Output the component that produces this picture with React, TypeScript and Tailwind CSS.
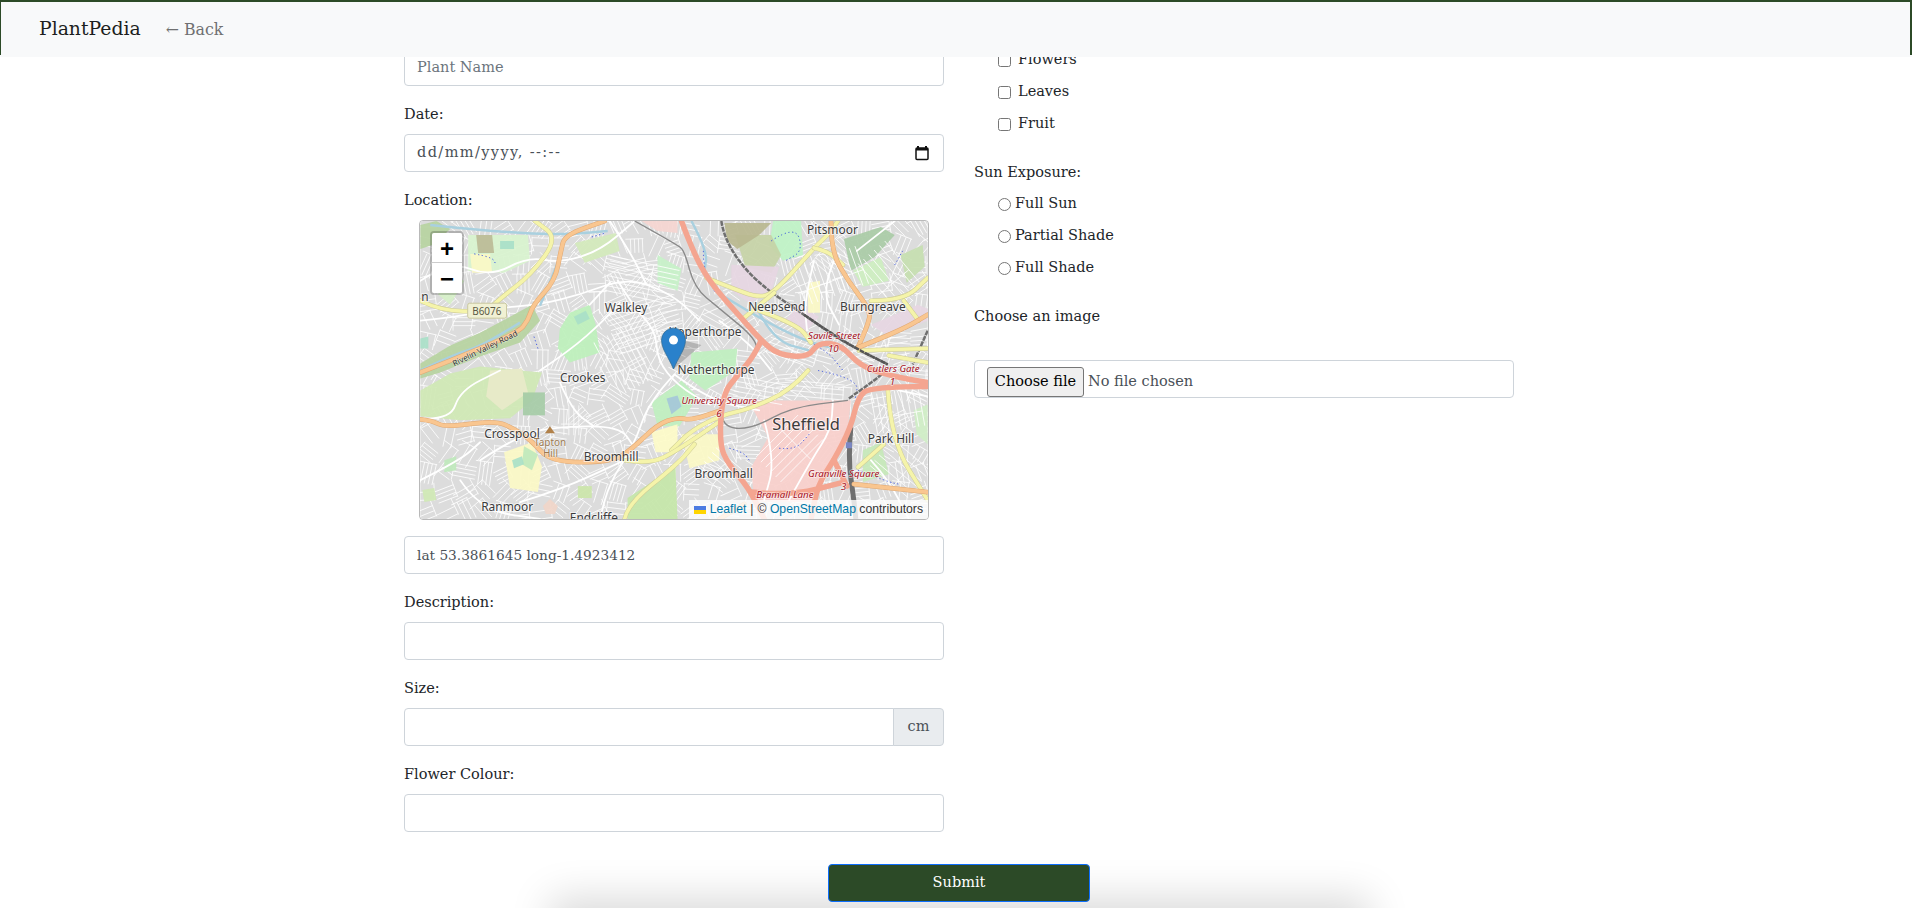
import React from 'react';

type Pt = [number, number];

const smooth = (pts: Pt[]) => {
  let d = `M${pts[0][0]} ${pts[0][1]}`;
  for (let i = 1; i < pts.length - 1; i++) {
    const mx = (pts[i][0] + pts[i + 1][0]) / 2;
    const my = (pts[i][1] + pts[i + 1][1]) / 2;
    d += ` Q${pts[i][0]} ${pts[i][1]} ${mx} ${my}`;
  }
  const last = pts[pts.length - 1];
  return `${d} L${last[0]} ${last[1]}`;
};

const poly = (pts: Pt[]) => pts.map((p) => p.join(',')).join(' ');

const land: { c: string; p: Pt[] }[] = [
  { c: '#cfe8b4', p: [[0, 170], [30, 153], [60, 146], [100, 150], [122, 152], [112, 180], [90, 198], [40, 200], [0, 196]] },
  { c: '#e8e9c9', p: [[70, 150], [102, 148], [108, 172], [82, 190], [66, 176]] },
  { c: '#a5cba6', p: [[103, 172], [125, 172], [125, 195], [103, 195]] },
  { c: '#b6d3a0', p: [[0, 143], [30, 125], [60, 112], [90, 96], [112, 84], [120, 100], [100, 122], [60, 136], [20, 152], [0, 158]] },
  { c: '#b6d3a0', p: [[0, 4], [16, 0], [30, 8], [12, 24], [0, 28]] },
  { c: '#d8f3ce', p: [[48, 14], [108, 14], [110, 40], [84, 52], [48, 50]] },
  { c: '#fbf8c6', p: [[50, 33], [70, 33], [72, 52], [52, 52]] },
  { c: '#bcbb96', p: [[56, 14], [72, 14], [74, 32], [58, 32]] },
  { c: '#a9e0c8', p: [[80, 20], [94, 20], [94, 28], [80, 28]] },
  { c: '#bdf0bb', p: [[150, 92], [170, 84], [176, 104], [180, 132], [150, 142], [138, 128], [140, 108]] },
  { c: '#a9e0c8', p: [[154, 96], [166, 90], [170, 98], [158, 104]] },
  { c: '#d2e9bb', p: [[155, 22], [196, 12], [200, 30], [165, 42]] },
  { c: '#c7f1c8', p: [[238, 34], [262, 48], [258, 70], [238, 62]] },
  { c: '#bff3c6', p: [[354, 0], [382, 0], [384, 34], [364, 40], [350, 24]] },
  { c: '#c6d3a6', p: [[316, 14], [352, 14], [362, 34], [352, 52], [326, 46]] },
  { c: '#b8b78f', p: [[305, 2], [352, 2], [340, 14], [318, 28], [308, 20]] },
  { c: '#a9cba6', p: [[425, 18], [462, 6], [476, 14], [456, 36], [432, 50]] },
  { c: '#cdeec0', p: [[434, 50], [462, 36], [470, 60], [444, 66]] },
  { c: '#c5deb0', p: [[482, 34], [504, 24], [506, 46], [488, 62]] },
  { c: '#e6d6e2', p: [[312, 44], [360, 46], [352, 72], [330, 82], [312, 70]] },
  { c: '#e6d6e2', p: [[452, 104], [499, 84], [509, 88], [509, 100], [470, 116]] },
  { c: '#e6d6e2', p: [[380, 84], [400, 96], [386, 112], [366, 100]] },
  { c: '#fbf8c6', p: [[389, 62], [401, 60], [401, 92], [389, 92]] },
  { c: '#bfefbf', p: [[272, 132], [318, 128], [316, 150], [286, 170], [270, 158]] },
  { c: '#bfefbf', p: [[232, 182], [262, 160], [278, 176], [260, 206], [238, 206]] },
  { c: '#a5c7d9', p: [[247, 178], [258, 175], [262, 186], [252, 194]] },
  { c: '#fbf8c6', p: [[84, 232], [112, 222], [122, 246], [118, 272], [90, 268]] },
  { c: '#bfe8bc', p: [[104, 226], [118, 234], [112, 250], [102, 244]] },
  { c: '#a9e0c8', p: [[92, 240], [102, 236], [104, 244], [94, 248]] },
  { c: '#c4e6a8', p: [[208, 278], [256, 246], [258, 299], [208, 299]] },
  { c: '#cbe5a9', p: [[158, 266], [172, 266], [172, 278], [158, 278]] },
  { c: '#f0d5c8', p: [[123, 286], [130, 279], [138, 286], [135, 294], [126, 294]] },
  { c: '#fdfbc8', p: [[232, 212], [258, 204], [258, 232], [236, 232]] },
  { c: '#f8cfcb', p: [[329, 180], [432, 180], [429, 207], [412, 247], [392, 282], [335, 282], [332, 247], [349, 217]] },
  { c: '#f5d5d0', p: [[222, 0], [258, 0], [258, 12], [238, 10]] },
  { c: '#fbf8c6', p: [[262, 214], [300, 214], [300, 240], [270, 248]] },
  { c: '#c6e8b9', p: [[444, 230], [462, 222], [470, 254], [444, 262]] },
  { c: '#cfeec6', p: [[495, 190], [509, 184], [509, 224], [498, 214]] },
  { c: '#a9e0c8', p: [[0, 118], [8, 116], [8, 128], [0, 128]] },
  { c: '#cfe8b4', p: [[2, 270], [14, 268], [16, 280], [4, 282]] },
  { c: '#bfe8bc', p: [[24, 240], [36, 236], [36, 250], [24, 252]] },
  { c: '#d6f0c8', p: [[20, 52], [44, 60], [30, 84], [18, 74]] },
];

// relleno de calles pequeñas: una retícula pseudoaleatoria, siempre igual
const fineStreets = (() => {
  let seed = 7;
  const rnd = () => {
    seed = (seed * 16807) % 2147483647;
    return seed / 2147483647;
  };
  const out: { d: string; t: string }[] = [];
  for (let y = 6; y < 310; y += 19) {
    for (let x = 6; x < 520; x += 19) {
      const a = Math.round(rnd() * 180);
      const w = 14 + rnd() * 10;
      let d = '';
      const rows = 2 + Math.floor(rnd() * 3);
      for (let r = 0; r < rows; r++) {
        const oy = -8 + (r * 16) / rows;
        d += `M${-w / 2} ${oy.toFixed(1)}H${(w / 2).toFixed(1)}`;
      }
      d += `M${(-w / 2).toFixed(1)} -9V9`;
      out.push({ d, t: `translate(${x} ${y}) rotate(${a})` });
    }
  }
  return out;
})();

const blocks: [number, number, number, number, number, number][] = [
  [222, 60, 70, 36, 12, 5], [226, 104, 70, 40, -18, 5], [204, 140, 60, 44, 62, 5],
  [410, 56, 40, 70, 70, 6], [470, 56, 60, 40, 50, 7], [340, 170, 50, 20, 10, 5],
  [300, 250, 34, 30, 40, 6], [372, 230, 60, 40, -45, 7], [478, 190, 40, 50, 80, 6],
  [480, 250, 50, 40, 40, 7], [368, 130, 40, 24, 20, 5], [460, 130, 60, 20, -10, 6],
  [395, 170, 60, 16, 5, 5], [150, 200, 30, 18, 90, 5],
];

const hatch = ([cx, cy, w, h, a, gap]: (typeof blocks)[number]) => {
  let d = '';
  for (let y = -h / 2; y <= h / 2; y += gap) d += `M${-w / 2} ${y}H${w / 2}`;
  d += `M${w / 8} ${-h / 2}V${h / 2}`;
  return { d, t: `translate(${cx} ${cy}) rotate(${a})` };
};

const streets: Pt[][] = [
  [[0, 60], [30, 40], [70, 56], [108, 36], [140, 42], [180, 30], [215, 0]],
  [[0, 100], [40, 96], [70, 88], [120, 84], [160, 74], [198, 60], [226, 62], [258, 78], [280, 100]],
  [[198, 60], [214, 86], [236, 110], [238, 140], [258, 165], [290, 184]],
  [[190, 0], [210, 30], [226, 62]],
  [[170, 84], [190, 62]],
  [[120, 150], [150, 130], [184, 100], [200, 82]],
  [[0, 198], [30, 200], [40, 170], [80, 150]],
  [[60, 240], [100, 214], [140, 206], [200, 206], [214, 226]],
  [[0, 260], [40, 240], [60, 222]],
  [[40, 260], [60, 290], [120, 299]],
  [[100, 282], [140, 270], [205, 240]],
  [[255, 154], [230, 180], [214, 226], [190, 262], [180, 299]],
  [[255, 154], [290, 180], [340, 190]],
  [[140, 162], [152, 190], [174, 206]],
  [[300, 100], [330, 122], [352, 150]],
  [[395, 40], [385, 80], [388, 110]],
  [[415, 40], [402, 70], [420, 104]],
  [[345, 200], [356, 240], [345, 280]],
  [[370, 280], [392, 240], [412, 210], [414, 180]],
  [[452, 240], [470, 260], [490, 299]],
  [[480, 170], [509, 176]],
  [[438, 30], [476, 0]],
];

const rivers: Pt[][] = [
  [[0, 150], [34, 134], [60, 126], [100, 102]],
  [[10, 4], [65, 10], [141, 14], [188, 10]],
  [[120, 85], [134, 52], [142, 30]],
  [[272, 0], [288, 30], [285, 50]],
  [[302, 74], [339, 97], [385, 120], [412, 127]],
  [[340, 92], [355, 120], [390, 130]],
];

const yellow: Pt[][] = [
  [[0, 80], [20, 90], [66, 91], [81, 77], [111, 54], [138, 17], [115, 0]],
  [[287, 57], [312, 67], [339, 77], [355, 72], [395, 27], [409, 14], [419, 0]],
  [[325, 97], [355, 72]],
  [[395, 27], [409, 30], [424, 44]],
  [[340, 90], [379, 104], [392, 122]],
  [[452, 80], [485, 80], [509, 57]],
  [[485, 80], [500, 100]],
  [[389, 150], [372, 170], [329, 189], [302, 195], [272, 210], [252, 230]],
  [[205, 240], [231, 244], [258, 230], [302, 200]],
  [[205, 299], [208, 284], [258, 244], [275, 224]],
  [[469, 168], [472, 220], [509, 280]],
  [[439, 247], [465, 224]],
  [[470, 135], [509, 142]],
  [[440, 130], [509, 128]],
];

const orange: Pt[][] = [
  [[0, 152], [31, 140], [98, 112], [108, 100], [113, 84], [135, 60], [141, 30], [145, 14], [185, 0]],
  [[412, 0], [412, 30], [429, 60], [452, 90], [449, 104], [439, 127]],
  [[439, 127], [482, 110], [509, 94]],
  [[0, 199], [11, 200], [25, 207], [75, 200], [95, 209], [111, 220], [131, 242], [191, 242], [211, 230], [238, 204], [258, 197], [272, 200], [302, 190]],
  [[435, 264], [509, 272]],
  [[300, 299], [325, 284]],
];

const salmon: Pt[][] = [
  [[262, 0], [272, 27], [289, 60], [319, 94], [342, 120], [359, 134], [389, 137], [399, 122], [422, 124], [442, 146], [474, 156], [509, 162]],
  [[342, 120], [335, 135], [319, 154], [303, 174], [300, 224], [309, 244], [329, 267], [345, 299]],
  [[508, 166], [452, 166], [439, 177], [432, 207], [415, 240], [399, 264], [392, 299]],
  [[332, 272], [370, 276], [425, 262]],
  [[415, 240], [428, 266]],
];

const rail: Pt[][] = [
  [[302, 0], [305, 20], [335, 60], [385, 94], [422, 120], [469, 144]],
  [[432, 207], [429, 237], [435, 280], [437, 299]],
  [[509, 110], [494, 144]],
  [[430, 178], [450, 164], [468, 150]],
];

const grayLine: Pt[][] = [
  [[215, 0], [258, 24], [265, 30], [275, 67], [299, 87], [339, 120], [335, 137], [325, 147]],
  [[302, 190], [302, 207], [332, 209], [372, 187], [429, 180]],
];

const dotted: Pt[][] = [
  [[54, 33], [72, 36], [76, 44]],
  [[172, 16], [186, 12]],
  [[114, 116], [118, 128]],
  [[352, 20], [376, 4], [384, 30], [366, 40]],
  [[284, 30], [284, 50], [296, 72]],
  [[388, 120], [408, 130], [424, 150]],
  [[399, 150], [440, 158], [436, 180]],
  [[310, 228], [324, 232], [330, 240]],
  [[360, 228], [376, 230], [390, 214]],
  [[439, 250], [470, 262], [480, 264]],
  [[476, 44], [484, 30]],
];

const places: [string, number, number][] = [
  ['n', 1, 80],
  ['Walkley', 185, 91],
  ['Neepsend', 329, 90],
  ['Burngreave', 421, 90],
  ['Pitsmoor', 388, 13],
  ['Hoperthorpe', 249, 115],
  ['Netherthorpe', 258, 154],
  ['Crookes', 140, 162],
  ['Crosspool', 64, 218],
  ['Broomhill', 164, 241],
  ['Ranmoor', 61, 291],
  ['Endcliffe', 150, 302],
  ['Broomhall', 275, 258],
  ['Park Hill', 449, 223],
];

const junctions: [string, number, number][] = [
  ['University Square', 262, 184],
  ['Savile Street', 389, 118],
  ['Cutlers Gate', 448, 152],
  ['Granville Square', 389, 257],
  ['Bramall Lane', 337, 278],
  ['6', 297, 197],
  ['10', 409, 131],
  ['1', 471, 165],
  ['3', 422, 270],
];

const MapLayer: React.FC = () => (
  <svg viewBox="0 0 509 299" className="block h-full w-full" style={{ fontFamily: '"Noto Sans", sans-serif' }}>
    <rect width="509" height="299" fill="#dcdcdc" />
    {fineStreets.map((h, i) => (
      <path key={i} d={h.d} transform={h.t} fill="none" stroke="#fff" strokeWidth="0.9" opacity="0.85" />
    ))}
    {land.map((l, i) => (
      <polygon key={i} points={poly(l.p)} fill={l.c} opacity="0.92" />
    ))}
    {blocks.map((b, i) => {
      const h = hatch(b);
      return <path key={i} d={h.d} transform={h.t} fill="none" stroke="#fff" strokeWidth="0.9" opacity="0.85" />;
    })}
    {streets.map((s, i) => (
      <path key={i} d={smooth(s)} fill="none" stroke="#fff" strokeWidth="1.8" strokeLinecap="round" />
    ))}
    {rivers.map((s, i) => (
      <path key={i} d={smooth(s)} fill="none" stroke="#a9d0df" strokeWidth="2.5" />
    ))}
    {dotted.map((s, i) => (
      <path key={i} d={smooth(s)} fill="none" stroke="#2b45e0" strokeWidth="0.9" strokeDasharray="1.2 2.6" />
    ))}
    {grayLine.map((s, i) => (
      <path key={i} d={smooth(s)} fill="none" stroke="#8a8a8a" strokeWidth="1.4" />
    ))}
    {rail.map((s, i) => (
      <path key={i} d={smooth(s)} fill="none" stroke="#6f6f6f" strokeWidth={i === 1 ? 5 : 2.5} strokeDasharray={i === 1 ? undefined : '5 1'} />
    ))}
    {yellow.map((s, i) => (
      <g key={i} fill="none" strokeLinecap="round">
        <path d={smooth(s)} stroke="#cfcd96" strokeWidth="4.6" />
        <path d={smooth(s)} stroke="#f5f4aa" strokeWidth="3.6" />
      </g>
    ))}
    {orange.map((s, i) => (
      <g key={i} fill="none" strokeLinecap="round">
        <path d={smooth(s)} stroke="#dfa874" strokeWidth="4.8" />
        <path d={smooth(s)} stroke="#f9c690" strokeWidth="3.8" />
      </g>
    ))}
    {salmon.map((s, i) => (
      <path key={i} d={smooth(s)} fill="none" stroke="#f4a590" strokeWidth="5.5" strokeLinecap="round" />
    ))}
    <path d={smooth(rail[0].slice(3))} fill="none" stroke="#555" strokeWidth="2.5" strokeDasharray="5 1" />
    <rect x="427" y="222" width="6" height="6" fill="#7b87c4" />

    <g fill="#3c3c3c" fontSize="12" stroke="#fff" strokeOpacity="0.65" strokeWidth="2" style={{ paintOrder: 'stroke' }}>
      {places.map(([t, x, y]) => (
        <text key={t} x={x} y={y}>
          {t}
        </text>
      ))}
      <text x="353" y="210" fontSize="16.5">
        Sheffield
      </text>
    </g>

    <g fill="#a50f22" fontStyle="italic" fontSize="9.8" stroke="#fff" strokeOpacity="0.6" strokeWidth="1.5" style={{ paintOrder: 'stroke' }}>
      {junctions.map(([t, x, y]) => (
        <text key={t} x={x} y={y}>
          {t}
        </text>
      ))}
    </g>

    <text x="34" y="146" fontSize="8.2" fill="#333" stroke="#fff" strokeOpacity="0.5" strokeWidth="1" transform="rotate(-26 34 146)" style={{ paintOrder: 'stroke' }}>
      Rivelin Valley Road
    </text>

    <polygon points="130,206 135,213 125,213" fill="#b1814a" />
    <g fill="#9c7a52" fontSize="10" stroke="#fff" strokeOpacity="0.5" strokeWidth="1.2" style={{ paintOrder: 'stroke' }}>
      <text x="114" y="226">
        Tapton
      </text>
      <text x="123" y="237">
        Hill
      </text>
    </g>

    <rect x="47.500" y="82.500" width="39" height="15" rx="2" fill="#f1f1d4" stroke="#c9c89f" />
    <text x="52" y="94" fontSize="10" fill="#5a5a44">
      B6076
    </text>

    {/* sombra y marcador */}
    <g transform="translate(-1 -5.500)">
      <polygon points="255,154 283,130 268,126 258,134" fill="#000" opacity="0.18" />
      <path
        d="M255 154 C250 142 243 134 243 125 A12 12 0 0 1 267 125 C267 134 260 142 255 154 Z"
        fill="#2a81cb"
        stroke="#2e6c97"
        strokeWidth="0.8"
      />
      <circle cx="255" cy="125" r="4.500" fill="#fff" />
    </g>
  </svg>
);

const inputBox = 'h-[38px] w-full rounded-[4px] border border-[#ced4da] bg-white px-3 text-[#495057] outline-none';

const FieldLabel: React.FC<{ text: string }> = ({ text }) => <div className="mb-2 h-6 leading-6">{text}</div>;

export default function App() {
  return (
    <div className="relative h-[908px] w-full overflow-hidden bg-white font-['DejaVu_Serif',serif] text-[14.5px] text-[#212529]">
      <header className="relative z-20 h-[57px] bg-[#f8f9fa]">
        <div className="flex h-[55px] items-center border-t-2 border-r-2 border-l border-[#2c4a27] pt-[2px] pl-[38px]">
          <span className="text-[18.8px] text-[#1c1e20]">PlantPedia</span>
          <span className="ml-[25px] text-[15.800px] text-[#6f7071]">← Back</span>
        </div>
      </header>

      <main className="-mt-[41px] ml-[404px] w-[1110px]">
        <div className="flex gap-[30px]">
          <div className="w-[540px]">
            <FieldLabel text="Plant Name:" />
            <input className={`${inputBox} mb-4 placeholder:text-[#6c757d]`} placeholder="Plant Name" readOnly />

            <FieldLabel text="Date:" />
            <div className={`${inputBox} mb-4 flex items-center justify-between`}>
              <span className="text-[#495057] tracking-[1.4px]">dd/mm/yyyy, --:--</span>
              <svg width="16" height="16" viewBox="0 0 16 16" className="mr-[1px]">
                <path d="M4 1v2M12 1v2" stroke="#111" strokeWidth="2" />
                <rect x="2" y="3" width="12" height="11.500" rx="1" fill="#fff" stroke="#111" strokeWidth="1.500" />
                <rect x="2" y="3" width="12" height="2.500" fill="#111" />
              </svg>
            </div>

            <FieldLabel text="Location:" />
            <div className="relative mb-4 ml-[15px] h-[300px] w-[510px] overflow-hidden rounded-[4px] border border-[#b9b9b9]">
              <MapLayer />
              <div className="absolute top-[10px] left-[10px] flex w-[34px] flex-col rounded-[4px] border-2 border-black/20 bg-clip-padding font-['Liberation_Sans',sans-serif]">
                <div className="flex h-[30px] items-center justify-center rounded-t-[2px] border-b border-[#ccc] bg-white pt-[2px] text-[24px] font-bold text-black">+</div>
                <div className="flex h-[30px] items-center justify-center rounded-b-[2px] bg-white pt-[2px] text-[24px] font-bold text-black">−</div>
              </div>
              <div className="absolute right-0 bottom-0 flex h-[19px] items-center bg-white/80 px-[5px] font-['Liberation_Sans',sans-serif] text-[12.2px] text-[#333]">
                <svg width="12" height="8" viewBox="0 0 12 8" className="mr-1">
                  <rect width="12" height="4" fill="#4c7be1" />
                  <rect y="4" width="12" height="4" fill="#ffd500" />
                </svg>
                <span className="text-[#0078a8]">Leaflet</span>
                <span className="mx-1">|</span>
                <span>©&nbsp;</span>
                <span className="text-[#0078a8]">OpenStreetMap</span>
                <span>&nbsp;contributors</span>
              </div>
            </div>

            <input className={`${inputBox} mb-4 text-[13.7px]`} value="lat 53.3861645 long-1.4923412" readOnly />

            <FieldLabel text="Description:" />
            <input className={`${inputBox} mb-4`} readOnly />

            <FieldLabel text="Size:" />
            <div className="mb-4 flex">
              <input className={`${inputBox} rounded-r-none`} readOnly />
              <span className="-ml-px flex h-[38px] w-[51px] shrink-0 items-center justify-center rounded-r-[4px] border border-[#ced4da] bg-[#e9ecef] text-[#495057]">cm</span>
            </div>

            <FieldLabel text="Flower Colour:" />
            <input className={inputBox} readOnly />
          </div>

          <div className="w-[540px] pt-8">
            {['Flowers', 'Leaves', 'Fruit'].map((t) => (
              <label key={t} className="mb-2 flex h-6 items-center pl-6">
                <input type="checkbox" className="m-0 h-[13px] w-[13px]" />
                <span className="ml-[7px]">{t}</span>
              </label>
            ))}
            <div className="mt-6">
              <FieldLabel text="Sun Exposure:" />
            </div>
            {['Full Sun', 'Partial Shade', 'Full Shade'].map((t) => (
              <label key={t} className="mb-2 flex h-6 items-center pl-6">
                <input type="radio" name="sun" className="m-0 h-[13px] w-[13px]" />
                <span className="ml-[4px]">{t}</span>
              </label>
            ))}
            <div className="mt-6 h-6 leading-6">Choose an image</div>
            <div className="mt-8 flex h-[38px] items-center rounded-[4px] border border-[#ced4da] px-3 text-[#495057]">
              <button type="button" className="mt-[6px] h-[30px] w-[97px] rounded-[3px] border border-[#767676] bg-[#efefef] text-black">
                Choose file
              </button>
              <span className="mt-[6px] ml-1">No file chosen</span>
            </div>
          </div>
        </div>

        <button type="button" className="relative z-10 mx-auto mt-8 block h-[38px] w-[262px] rounded-[4px] border border-[#0d6efd] bg-[#2c4a27] text-white">
          Submit
        </button>
      </main>

      <div className="absolute top-[908px] left-[560px] h-10 w-[800px] shadow-[0_0_40px_10px_rgba(0,0,0,0.15)]" />
    </div>
  );
}
